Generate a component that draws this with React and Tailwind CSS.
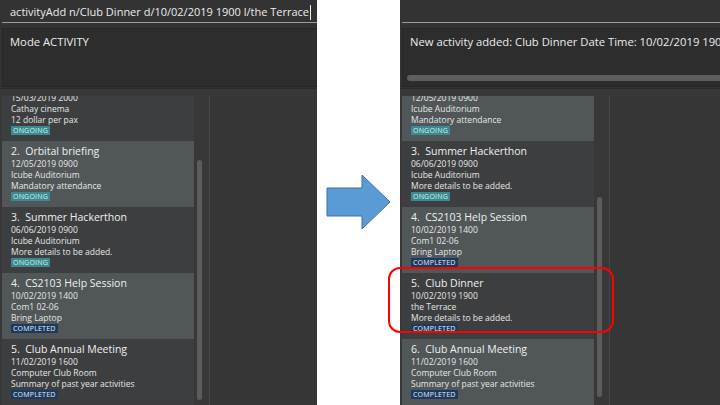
import React, { useLayoutEffect, useRef } from "react";

const leftCards = [
  { n: 1, title: "Movie Night", date: "15/03/2019 2000", place: "Cathay cinema", note: "12 dollar per pax", status: "ONGOING" },
  { n: 2, title: "Orbital briefing", date: "12/05/2019 0900", place: "Icube Auditorium", note: "Mandatory attendance", status: "ONGOING" },
  { n: 3, title: "Summer Hackerthon", date: "06/06/2019 0900", place: "Icube Auditorium", note: "More details to be added.", status: "ONGOING" },
  { n: 4, title: "CS2103 Help Session", date: "10/02/2019 1400", place: "Com1 02-06", note: "Bring Laptop", status: "COMPLETED" },
  { n: 5, title: "Club Annual Meeting", date: "11/02/2019 1600", place: "Computer Club Room", note: "Summary of past year activities", status: "COMPLETED" },
];

const rightCards = [
  { n: 2, title: "Orbital briefing", date: "12/05/2019 0900", place: "Icube Auditorium", note: "Mandatory attendance", status: "ONGOING" },
  { n: 3, title: "Summer Hackerthon", date: "06/06/2019 0900", place: "Icube Auditorium", note: "More details to be added.", status: "ONGOING" },
  { n: 4, title: "CS2103 Help Session", date: "10/02/2019 1400", place: "Com1 02-06", note: "Bring Laptop", status: "COMPLETED" },
  { n: 5, title: "Club Dinner", date: "10/02/2019 1900", place: "the Terrace", note: "More details to be added.", status: "COMPLETED" },
  { n: 6, title: "Club Annual Meeting", date: "11/02/2019 1600", place: "Computer Club Room", note: "Summary of past year activities", status: "COMPLETED" },
];

const StatusTag = ({ status }) => (
  <span
    className={`inline-block px-[2px] text-[7px] leading-[9px] tracking-[0.2px] ${
      status === "ONGOING" ? "bg-[#3b8a92] text-[#d6f0f0]" : "bg-[#1b3a5e] text-[#e6eef8]"
    }`}
  >
    {status}
  </span>
);

const ActivityCard = ({ card, light }) => (
  <div className={`h-[66px] pl-[9px] pt-[4px] ${light ? "bg-[#515658]" : "bg-[#3c3e3f]"}`}>
    <div className="text-[10.5px] leading-[13px] text-[#f0f0f0] whitespace-nowrap">
      {card.n}.&nbsp; {card.title}
    </div>
    <div className="text-[8.5px] leading-[11px] text-[#e6e6e6] whitespace-nowrap">
      <div>{card.date}</div>
      <div>{card.place}</div>
      <div>{card.note}</div>
    </div>
    <div className="mt-[1px] flex">
      <StatusTag status={card.status} />
    </div>
  </div>
);

const AppWindow = ({ command, result, cards, firstLight, scroll, thumbClass, hScroll, widthClass }) => {
  const listRef = useRef(null);

  useLayoutEffect(() => {
    // list is scrolled a little way down, like the original window
    if (listRef.current) listRef.current.scrollTop = scroll;
  }, [scroll]);

  return (
    <div className={`${widthClass} h-full shrink-0 overflow-hidden bg-[#333333] flex flex-col`}>
      {/* Command box */}
      <div className="ml-[2px] h-[23px] shrink-0 border-b border-[#9c9c9c] flex items-center pt-[2px] pl-[8px] text-[11px] text-[#ececec] whitespace-nowrap">
        {command}
        {command && <span className="ml-[1px] w-px h-[15px] bg-[#f0f0f0]"></span>}
      </div>

      {/* Result display */}
      <div className="ml-[2px] mt-[5px] h-[59px] shrink-0 bg-[#2d2d2d] border border-[#262626] pl-[7px] pt-[5px] flex flex-col w-[400px]">
        <div className="text-[11.25px] leading-[16px] text-[#ececec] whitespace-nowrap">{result}</div>
        {hScroll && <div className="mt-auto mb-[5px] ml-[-3px] h-[6px] rounded-full bg-[#5e5e5e]"></div>}
      </div>

      {/* List area */}
      <div className="mt-[1px] flex-1 border-t border-[#2a2a2a] bg-[#383838] flex pt-[7px]">
        <div className="pl-[2px] flex">
          <div ref={listRef} className="w-[192px] h-[309px] overflow-hidden">
            {cards.map((c, i) => (
              <ActivityCard key={c.n} card={c} light={firstLight ? i % 2 === 0 : i % 2 === 1} />
            ))}
          </div>
          <div className="ml-[3px] w-[6px]">
            <div className={`${thumbClass} w-[5px] rounded-full bg-[#5c5c5c]`}></div>
          </div>
        </div>
        <div className="ml-[6px] w-px h-full bg-[#464646]"></div>
        <div className="flex-1 bg-[#363636]"></div>
      </div>
    </div>
  );
};

const Arrow = () => (
  <svg width="66" height="57" viewBox="0 0 66 57">
    <polygon
      points="1,14 36,14 36,1 64,28 36,55 36,42 1,42"
      fill="#5b9bd5"
      stroke="#41719c"
      strokeWidth="1"
    />
  </svg>
);

export default function App() {
  return (
    <div className="relative w-[720px] h-[405px] bg-white flex font-['Open_Sans',sans-serif] overflow-hidden">
      <AppWindow
        widthClass="w-[317px]"
        command="activityAdd n/Club Dinner d/10/02/2019 1900 l/the Terrace"
        result="Mode ACTIVITY"
        cards={leftCards}
        firstLight={false}
        scroll={26}
        thumbClass="mt-[64px] h-[240px]"
        hScroll={false}
      />

      <div className="w-[83px] shrink-0 flex items-center justify-center">
        <Arrow />
      </div>

      <AppWindow
        widthClass="w-[320px]"
        command=""
        result="New activity added: Club Dinner Date Time: 10/02/2019 1900"
        cards={rightCards}
        firstLight={true}
        scroll={27}
        thumbClass="mt-[101px] h-[200px]"
        hScroll={true}
      />

      {/* highlight around the new activity */}
      <div className="absolute left-[388px] top-[267px] w-[226px] h-[66px] rounded-[12px] border-2 border-[#ff0000]"></div>
    </div>
  );
}
